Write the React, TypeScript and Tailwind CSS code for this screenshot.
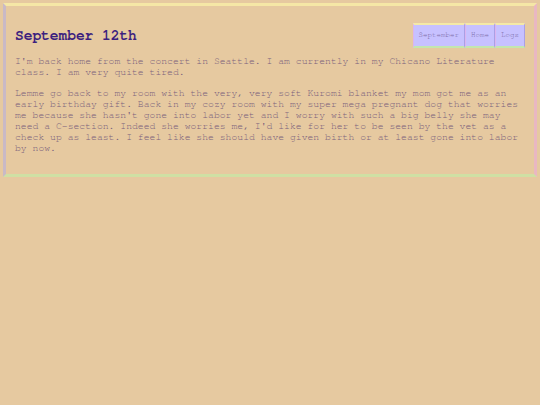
const mono = { fontFamily: '"Nimbus Mono PS", "Nimbus Mono L", "FreeMono", "Courier", "Courier New", monospace' };

function NavButton({ label }: { label: string }) {
  return (
    <a
      href="#"
      className="block h-[25px] border-y-2 border-x-[1.5px] border-t-[#f4e9a6] border-b-[#c4e6ae] border-l-[#dab4f0] border-r-[#a9a0e6] bg-[#c7c1ff] px-[5px] text-[7.5px] leading-[21px] text-[#7a6aa6]"
    >
      {label}
    </a>
  );
}

export default function App() {
  return (
    <div className="min-h-[405px] bg-[#e6c9a0] p-[3px]" style={mono}>
      <div className="border-[3px] border-t-[#f5e7a6] border-l-[#c9b9c6] border-r-[#e9b7c2] border-b-[#cfe0a4] px-[9px] pt-[17px] pb-[20px]">
        <div className="flex items-center justify-between">
          <h1 className="text-[14.5px] font-bold leading-[17px] text-[#3d1f7f]">September 12th</h1>
          <nav className="flex">
            <NavButton label="September" />
            <NavButton label="Home" />
            <NavButton label="Logs" />
          </nav>
        </div>
        <div className="mt-[8px] text-[9.75px] leading-[11px] text-[#7a5f7c]">
          <p>
            I'm back home from the concert in Seattle. I am currently in my Chicano Literature class. I am very quite
            tired.
          </p>
          <p className="mt-[10px]">
            Lemme go back to my room with the very, very soft Kuromi blanket my mom got me as an early birthday gift.
            Back in my cozy room with my super mega pregnant dog that worries me because she hasn't gone into labor yet
            and I worry with such a big belly she may need a C-section. Indeed she worries me, I'd like for her to be
            seen by the vet as a check up as least. I feel like she should have given birth or at least gone into
            labor by now.
          </p>
        </div>
      </div>
    </div>
  );
}
